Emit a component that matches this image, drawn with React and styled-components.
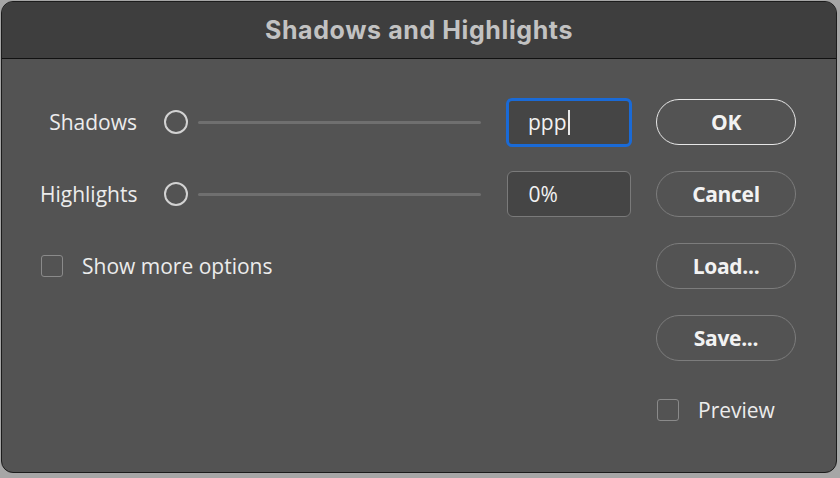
import React from 'react'
import styled, { createGlobalStyle } from 'styled-components'

const GlobalStyle = createGlobalStyle`
  html, body {
    margin: 0;
    padding: 0;
    background: #a6a6a6;
  }
  body {
    width: 840px;
    height: 478px;
    overflow: hidden;
    font-family: 'Open Sans', 'Noto Sans', sans-serif;
  }
  * {
    box-sizing: border-box;
  }
`

const Window = styled.div`
  margin: 1px 0 0 1px;
  width: 836px;
  height: 472px;
  border-radius: 12px;
  border: 1px solid #1c1c1c;
  background: #535353;
  overflow: hidden;
  display: flex;
  flex-direction: column;
`

const TitleBar = styled.div`
  height: 57px;
  flex: none;
  background: #3e3e3e;
  border-bottom: 1px solid #111;
  display: flex;
  align-items: center;
  justify-content: center;
  color: #c2c2c2;
  font-family: Inter, Roboto, 'Liberation Sans', sans-serif;
  font-weight: 700;
  font-size: 25px;
  letter-spacing: 0.6px;
  padding-bottom: 1px;
`

const Body = styled.div`
  flex: 1;
  display: flex;
  padding: 40px 40px 0 38px;
  color: #ececec;
  font-size: 21px;
`

const Form = styled.div`
  display: grid;
  grid-template-columns: 97px 369px 126px;
  grid-auto-rows: 46px;
  row-gap: 26px;
  align-content: start;
  align-items: center;
`

const Label = styled.div`
  text-align: right;
`

const Slider = styled.div`
  margin-left: 27px;
  margin-right: 25px;
  display: flex;
  align-items: center;
  gap: 10px;
`

const Thumb = styled.div`
  width: 24px;
  height: 24px;
  flex: none;
  border-radius: 50%;
  border: 2px solid #d2d2d2;
`

const Track = styled.div`
  flex: 1;
  height: 3px;
  background: #6f6f6f;
  border-radius: 2px;
`

const Input = styled.div`
  height: ${p => (p.$focused ? '49px' : '46px')};
  width: ${p => (p.$focused ? '126px' : '124px')};
  justify-self: center;
  border-radius: 6px;
  background: #454545;
  border: ${p => (p.$focused ? '3px solid #1a6ad6' : '1.5px solid #7a7a7a')};
  display: flex;
  align-items: center;
  padding-left: ${p => (p.$focused ? '19px' : '20.5px')};
  color: #f2f2f2;
  font-size: 21px;
`

const Caret = styled.span`
  display: inline-block;
  width: 2px;
  height: 25px;
  margin-left: 1px;
  background: #e8e8e8;
`

const CheckRow = styled.label`
  grid-column: 1 / span 3;
  display: flex;
  align-items: center;
  gap: 19px;
  padding-left: 1px;
`

const Box = styled.span`
  width: 22px;
  height: 22px;
  flex: none;
  border: 1.5px solid #8a8a8a;
  border-radius: 3px;
`

const Actions = styled.div`
  width: 140px;
  margin-left: 24px;
  display: flex;
  flex-direction: column;
  gap: 26px;
`

const Button = styled.button`
  height: 46px;
  width: 140px;
  border-radius: 23px;
  background: transparent;
  border: 1.5px solid ${p => (p.$primary ? '#e6e6e6' : '#7c7c7c')};
  color: #f2f2f2;
  font-family: 'Open Sans', 'Noto Sans', sans-serif;
  font-weight: 700;
  font-size: 21px;
  letter-spacing: -0.3px;
  padding: 0 0 1px;
`

const PreviewRow = styled(CheckRow)`
  margin-top: 9px;
`

export default function App() {
  return (
    <>
      <GlobalStyle />
      <Window>
        <TitleBar>Shadows and Highlights</TitleBar>
        <Body>
          <Form>
            <Label>Shadows</Label>
            <Slider>
              <Thumb />
              <Track />
            </Slider>
            <Input $focused>
              ppp<Caret />
            </Input>

            <Label>Highlights</Label>
            <Slider>
              <Thumb />
              <Track />
            </Slider>
            <Input>0%</Input>

            <CheckRow>
              <Box />
              Show more options
            </CheckRow>
          </Form>
          <Actions>
            <Button $primary>OK</Button>
            <Button>Cancel</Button>
            <Button>Load...</Button>
            <Button>Save...</Button>
            <PreviewRow>
              <Box />
              Preview
            </PreviewRow>
          </Actions>
        </Body>
      </Window>
    </>
  )
}
